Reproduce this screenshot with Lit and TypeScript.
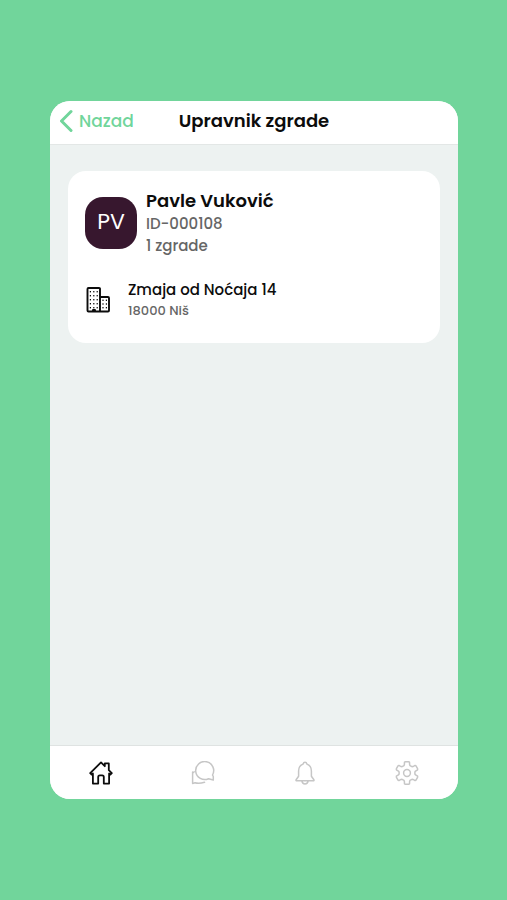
import { LitElement, html, css, svg } from "lit";
import { customElement, state } from "lit/decorators.js";

const dots = (xs: number[], ys: number[]) =>
  xs.flatMap((x) => ys.map((y) => svg`<rect x=${x} y=${y} width="1.2" height="1.4" fill="currentColor" stroke="none"/>`));

const gearPath = (() => {
  const teeth = 6;
  const outline: [number, number][] = [
    [8, -0.38],
    [8.8, -0.3],
    [11.1, -0.23],
    [11.4, -0.14],
    [11.4, 0.14],
    [11.1, 0.23],
    [8.8, 0.3],
    [8, 0.38],
  ];
  const pts: string[] = [];
  for (let i = 0; i < teeth; i++) {
    const a = (i * 2 * Math.PI) / teeth - Math.PI / 2;
    for (const [r, d] of outline) {
      pts.push(`${(12 + r * Math.cos(a + d)).toFixed(2)} ${(12 + r * Math.sin(a + d)).toFixed(2)}`);
    }
  }
  return `M${pts.join("L")}Z`;
})();

const tabs = [
  {
    id: "home",
    label: "Početna",
    icon: svg`<path d="M1.200 12.200 12 1.400l3.800 3.800V2.400h4v6.800l3 3-1.400 1.300-1.300-1V22.600h-5.300V16q0-1.600-1.600-1.600h-2.400Q9.200 14.400 9.200 16v6.600H3.900V12.500l-1.300 1Z"/>`,
  },
  {
    id: "chat",
    label: "Poruke",
    icon: svg`<path d="M22.300 19V15.500L21.500 14A9 9 0 1 0 17.500 17.700ZM1.600 11V22.600L4 21.800Q8 23 13.500 21.300M1.600 12.500Q2 11.500 3.200 10.800"/>`,
  },
  {
    id: "alerts",
    label: "Obaveštenja",
    icon: svg`<path d="M12 1.200q1.500 0 1.900 1.900 4.500 1.500 4.500 7v5.200l2.500 3.500q.4.900-.7.900H3.800q-1.100 0-.7-.9l2.500-3.500v-5.200q0-5.500 4.500-7Q10.500 1.200 12 1.200ZM8.800 19.900q.5 3 3.200 3t3.200-3"/>`,
  },
  {
    id: "settings",
    label: "Podešavanja",
    icon: svg`<path d=${gearPath}/><circle cx="12" cy="12" r="3.400"/>`,
  },
];

@customElement("app-root")
export class AppRoot extends LitElement {
  @state() private active = "home";

  static styles = css`
    :host {
      display: flex;
      box-sizing: border-box;
      min-height: 100vh;
      padding: 101px 49px 101px 50px;
      background: #71d59b;
      font-family: Poppins, Inter, "Noto Sans", sans-serif;
      color: #0c0c0c;
    }
    .phone {
      flex: 1;
      display: flex;
      flex-direction: column;
      background: #edf2f1;
      border-radius: 20px;
      overflow: hidden;
    }
    button {
      border: 0;
      padding: 0;
      background: none;
      font: inherit;
      color: inherit;
      cursor: pointer;
    }
    svg {
      display: block;
      fill: none;
      stroke: currentColor;
      stroke-linejoin: round;
      stroke-linecap: round;
    }
    header {
      display: grid;
      grid-template-columns: 1fr auto 1fr;
      align-items: center;
      height: 44px;
      padding: 0 9px 4px;
      box-sizing: border-box;
      background: #fff;
      border-bottom: 1px solid #e3e7e6;
    }
    .back {
      display: flex;
      align-items: center;
      justify-self: start;
      gap: 6px;
      color: #71d59b;
      font-size: 17px;
      line-height: 24px;
      font-weight: 500;
    }
    h1,
    h2,
    h3,
    p {
      margin: 0;
    }
    h1,
    h2 {
      font-size: 18px;
      line-height: 24px;
      font-weight: 600;
    }
    main {
      flex: 1;
      padding: 26px 18px;
    }
    .card {
      background: #fff;
      border-radius: 18px;
      padding: 18px 17px 22px;
    }
    .person {
      display: flex;
      align-items: center;
      gap: 9px;
    }
    .avatar {
      width: 52px;
      height: 52px;
      border-radius: 18px;
      background: #37172e;
      color: #fff;
      font-size: 22px;
      line-height: 50px;
      text-align: center;
      font-weight: 400;
    }
    .person p {
      font-size: 15px;
      line-height: 22px;
      color: #666;
      font-weight: 500;
    }
    .building {
      display: flex;
      align-items: center;
      gap: 16px;
      margin-top: 22px;
    }
    h3 {
      font-size: 15px;
      line-height: 22px;
      font-weight: 500;
    }
    .building p {
      font-size: 13px;
      line-height: 20px;
      color: #666;
      font-weight: 500;
    }
    nav {
      display: grid;
      grid-template-columns: repeat(4, 1fr);
      height: 54px;
      box-sizing: border-box;
      background: #fff;
      border-top: 1px solid #dfe3e2;
    }
    .tab {
      display: grid;
      place-items: center;
      color: #c6c6c6;
    }
    .tab[aria-current="page"] {
      color: #0c0c0c;
    }
  `;

  render() {
    return html`
      <div class="phone">
        <header>
          <button class="back">
            <svg width="14" height="24" viewBox="0 0 14 24" stroke-width="3" aria-hidden="true"><path d="M12 2.500 2.500 12 12 21.500"/></svg>
            Nazad
          </button>
          <h1>Upravnik zgrade</h1>
        </header>
        <main>
          <section class="card">
            <div class="person">
              <div class="avatar">PV</div>
              <div>
                <h2>Pavle Vuković</h2>
                <p>ID-000108</p>
                <p>1 zgrade</p>
              </div>
            </div>
            <div class="building">
              <svg width="27" height="27" viewBox="0 0 27 27" stroke-width="1.900" aria-hidden="true">
                <path d="M15 24.500V2q0-1-1-1H3.500q-1 0-1 1V23.500q0 1 1 1H23q1 0 1-1V11q0-1-1-1H15"/>
                ${dots([4.8, 8.2, 11.6], [4, 8, 12, 16, 20])}
                ${dots([17.4, 20.8], [12.6, 16.3, 20])}
                <path d="M8 24v-1h2v1"/>
              </svg>
              <div>
                <h3>Zmaja od Noćaja 14</h3>
                <p>18000 Niš</p>
              </div>
            </div>
          </section>
        </main>
        <nav>
          ${tabs.map(
            (t) => html`<button
              class="tab"
              aria-label=${t.label}
              aria-current=${t.id === this.active ? "page" : "false"}
              @click=${() => (this.active = t.id)}
            >
              <svg width="24" height="24" viewBox="0 0 24 24" stroke-width=${t.id === "home" ? 1.8 : 1.5} aria-hidden="true">${t.icon}</svg>
            </button>`
          )}
        </nav>
      </div>
    `;
  }
}
